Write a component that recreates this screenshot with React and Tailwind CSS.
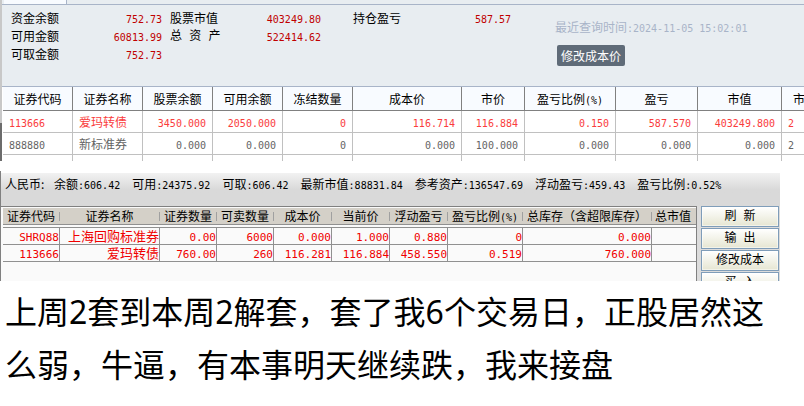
const holdingCols = [
  { title: '证券代码', width: 'w-[70px]' },
  { title: '证券名称', width: 'w-[70px]' },
  { title: '股票余额', width: 'w-[70px]' },
  { title: '可用余额', width: 'w-[70px]' },
  { title: '冻结数量', width: 'w-[70px]' },
  { title: '成本价', width: 'w-[109px]' },
  { title: '市价', width: 'w-[63px]' },
  { title: '盈亏比例', unit: '(%)', width: 'w-[91px]' },
  { title: '盈亏', width: 'w-[82px]' },
  { title: '市值', width: 'w-[84px]' },
]

const holdings = [
  {
    color: 'text-[#fa3c3c]',
    cells: ['113666', '爱玛转债', '3450.000', '2050.000', '0', '116.714', '116.884', '0.150', '587.570', '403249.800'],
    last: '2',
  },
  {
    color: 'text-[#646464]',
    cells: ['888880', '新标准券', '0.000', '0.000', '0', '0.000', '100.000', '0.000', '0.000', '0.000'],
    last: '2',
  },
]

const summary = [
  ['余额', '606.42'],
  ['可用', '24375.92'],
  ['可取', '606.42'],
  ['最新市值', '88831.84'],
  ['参考资产', '136547.69'],
  ['浮动盈亏', '459.43'],
  ['盈亏比例', '0.52%'],
]

const positionCols = [
  { title: '证券代码', width: 'w-[57px]' },
  { title: '证券名称', width: 'w-[100px]' },
  { title: '证券数量', width: 'w-[57px]' },
  { title: '可卖数量', width: 'w-[57px]' },
  { title: '成本价', width: 'w-[58px]' },
  { title: '当前价', width: 'w-[58px]' },
  { title: '浮动盈亏', width: 'w-[58px]' },
  { title: '盈亏比例', unit: '(%)', width: 'w-[75px]' },
  { title: '总库存（含超限库存）', width: 'w-[129px]' },
]

const positions = [
  ['SHRQ88', '上海回购标准券', '0.00', '6000', '0.000', '1.000', '0.880', '0', '0.000'],
  ['113666', '爱玛转债', '760.00', '260', '116.281', '116.884', '458.550', '0.519', '760.000'],
]

// Digits are set smaller than the Chinese text so that one digit is half a character wide
function Num({ children }) {
  return <span className="font-['DejaVu_Sans_Mono',monospace] text-[10px] leading-none">{children}</span>
}

function Balance({ label, value }) {
  return (
    <div className="flex h-[18px] items-center justify-between">
      <dt className="whitespace-nowrap">{label}</dt>
      <dd className="text-[#c00000]"><Num>{value}</Num></dd>
    </div>
  )
}

function AccountPanel() {
  return (
    <section className="flex border-l-2 border-[#c8c8c8] bg-[#e8edf1]">
      <div className="min-w-0 flex-1">
        {/* Tab strip */}
        <div className="flex h-[5px] border-b border-[#a8b4c8] pl-[2px]">
          <div className="w-[63px] border-r border-[#a8b4c8] bg-[#f8fbff]"></div>
        </div>

        {/* Balances */}
        <div className="flex h-[82px] border-b border-[#a8b4c8] pl-[9px] pt-1">
          <dl className="w-[151px]">
            <Balance label="资金余额" value="752.73" />
            <Balance label="可用金额" value="60813.99" />
            <Balance label="可取金额" value="752.73" />
          </dl>
          <dl className="ml-2 w-[151px]">
            <Balance label="股票市值" value="403249.80" />
            <Balance label={<span className="font-['Liberation_Mono','Noto_Sans_CJK_SC',monospace]">总 资 产</span>} value="522414.62" />
          </dl>
          <dl className="ml-8 w-[158px]">
            <Balance label="持仓盈亏" value="587.57" />
          </dl>
          <div className="ml-11 flex flex-col items-start gap-2 pt-2">
            <p className="h-5 whitespace-nowrap leading-5 text-[#a8b4c8]">
              最近查询时间<Num>:2024-11-05 15:02:01</Num>
            </p>
            <button className="ml-[2px] h-[21px] rounded-xs bg-[#5f6b78] px-1 leading-5 text-white">修改成本价</button>
          </div>
        </div>
      </div>
    </section>
  )
}

function HoldingsTable() {
  return (
    <section className="flex overflow-hidden">
      {/* Scroll track at the left edge */}
      <div className="flex w-[3px] shrink-0 flex-col pr-[1px]">
        <div className="h-9 bg-[#c8c8c8]"></div>
        <div className="flex-1 bg-[#6c6c6c]"></div>
      </div>
      <table className="w-full table-fixed border-separate border-spacing-0">
        <thead>
          <tr className="h-6 bg-[#f8fbff]">
            {holdingCols.map((col) => (
              <th key={col.title} className={`${col.width} border-b border-r border-[#808080] p-0 font-normal`}>
                {col.title}{col.unit && <Num>{col.unit}</Num>}
              </th>
            ))}
            <th className="overflow-hidden whitespace-nowrap border-b border-[#808080] p-0 pl-[11px] text-left font-normal">市</th>
          </tr>
        </thead>
        <tbody>
          {holdings.map((row) => (
            <tr key={row.cells[0]} className={`h-[22px] ${row.color}`}>
              {row.cells.map((cell, i) => (
                <td key={i} className={`border-b border-r border-[#c0c0c0] px-[6px] py-0 ${i < 2 ? 'text-left' : 'text-right'}`}>
                  {i === 1 ? cell : <Num>{cell}</Num>}
                </td>
              ))}
              <td className="border-b border-[#c0c0c0] px-[6px] py-0"><Num>{row.last}</Num></td>
            </tr>
          ))}
          <tr className="h-[6px]">
            {holdingCols.map((col) => (
              <td key={col.title} className="border-r border-[#c0c0c0] p-0"></td>
            ))}
            <td className="p-0"></td>
          </tr>
        </tbody>
      </table>
    </section>
  )
}

function SideButton({ children }) {
  return (
    <button className="h-[21px] shrink-0 border border-[#7f9db9] bg-linear-to-b from-white to-[#e6e6d2] pt-[2px] font-['Liberation_Mono','Noto_Sans_CJK_SC',monospace] leading-[17px] shadow-[inset_0_0_0_1px_#ffffff80]">
      {children}
    </button>
  )
}

function PositionPanel() {
  return (
    <section className="mt-[10px] mr-6 h-[110px] overflow-hidden border-l border-[#808080] bg-[#dcdcdc]">
      <div className="h-[2px] bg-white"></div>
      {/* Totals */}
      <div className="flex h-[33px] gap-3 whitespace-nowrap bg-linear-to-b from-[#f2f2f2] to-[#d9d9d9] to-50% pl-1 leading-[22px]">
        <span className="w-[37px]">人民币:</span>
        {summary.map(([label, value]) => (
          <span key={label}>{label}<Num>:{value}</Num></span>
        ))}
      </div>

      <div className="flex">
        <div className="h-20 min-w-0 flex-1 border-r border-t border-[#808080] bg-[#fafafa] pl-[2px] pt-[1px]">
          <table className="w-full table-fixed border-separate border-spacing-0">
            <thead>
              <tr className="h-[17px] bg-[#d4d0c8]">
                {positionCols.map((col) => (
                  <th key={col.title} className={`${col.width} whitespace-nowrap border-b border-[#909090] p-0 font-normal leading-4`}>
                    <div className="flex h-4 items-center">
                      <span className="flex-1">{col.title}{col.unit && <Num>{col.unit}</Num>}</span>
                      <i className="h-[9px] w-px bg-[#a0a0a0]"></i>
                    </div>
                  </th>
                ))}
                <th className="whitespace-nowrap border-b border-[#909090] p-0 pl-[3px] text-left font-normal leading-4">总市值</th>
              </tr>
              <tr className="h-[3px]">
                <td colSpan={10} className="border-b border-[#909090] p-0"></td>
              </tr>
            </thead>
            <tbody className="text-[13px] text-[#f00000]">
              {positions.map((row) => (
                <tr key={row[0]}>
                  {row.map((cell, i) => (
                    <td key={i} className="whitespace-nowrap border-b border-r border-[#909090] p-0 text-right">
                      <div className="h-4 leading-[15px]">
                        {i === 1 ? cell : <span className="font-['DejaVu_Sans_Mono',monospace] text-[11px] leading-none">{cell}</span>}
                      </div>
                    </td>
                  ))}
                  <td className="border-b border-[#909090] p-0"></td>
                </tr>
              ))}
            </tbody>
          </table>
        </div>
        <div className="ml-1 mr-[1px] flex h-[75px] w-[78px] flex-col gap-[1px] overflow-hidden">
          <SideButton>刷 新</SideButton>
          <SideButton>输 出</SideButton>
          <SideButton>修改成本</SideButton>
          <SideButton>买 入</SideButton>
        </div>
      </div>
    </section>
  )
}

export default function App() {
  return (
    <main className="overflow-hidden bg-white font-['Noto_Sans_CJK_SC',sans-serif] text-[12px] leading-[18px] text-black">
      <AccountPanel />
      <HoldingsTable />
      <PositionPanel />
      <p className="pl-[5px] pr-6 pt-1 font-['Noto_Sans','Noto_Sans_CJK_SC',sans-serif] text-[32px] leading-[53px]">
        上周2套到本周2解套，套了我6个交易日，正股居然这么弱，牛逼，有本事明天继续跌，我来接盘
      </p>
    </main>
  )
}
